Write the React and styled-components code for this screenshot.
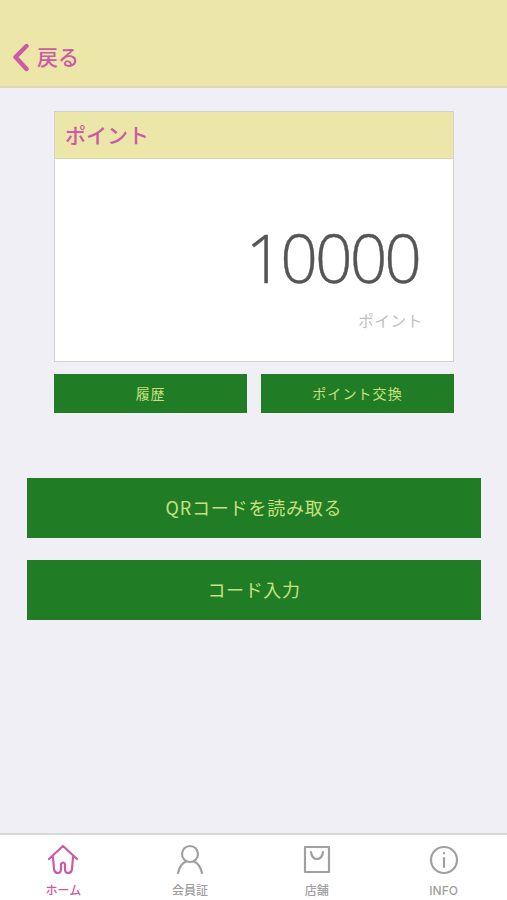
import React from "react";
import styled, { createGlobalStyle } from "styled-components";

const Global = createGlobalStyle`
  html, body { margin: 0; padding: 0; background: #efeff5; }
  body { font-family: "Noto Sans CJK JP", "Noto Sans", sans-serif; }
  * { box-sizing: border-box; }
`;
const Page = styled.div`
  width: 507px; height: 900px; display: flex; flex-direction: column; background: #efeff5; overflow: hidden;
`;
const Header = styled.header`
  height: 88px; flex: none; background: #ece6a9; border-bottom: 2px solid #dcd8b8;
  display: flex; align-items: flex-end; padding: 0 0 14px 12px; gap: 3px;
`;
const BackLabel = styled.span`
  font-size: 21px; line-height: 32px; font-weight: 500; color: #cc5aa5;
`;
const Main = styled.main`
  flex: 1; display: flex; flex-direction: column; padding: 23px 26px 0 27px;
`;
const PointSection = styled.section`
  padding: 0 27px; display: flex; flex-direction: column; gap: 12px;
`;
const Card = styled.div`
  height: 251px; border: 1px solid #d2d2d2; background: #fff; display: flex; flex-direction: column;
`;
const CardTitle = styled.div`
  height: 47px; flex: none; background: #ece6a9; border-bottom: 1px solid #d8d4ac; padding-left: 10px;
  font-size: 21px; line-height: 45px; font-weight: 500; color: #cc5aa5;
`;
const CardBody = styled.div`
  flex: 1; display: flex; flex-direction: column; align-items: flex-end; padding: 55px 31px 0 0;
`;
const Amount = styled.div`
  font-family: "Open Sans", sans-serif; font-weight: 300; font-size: 66px; line-height: 86px; letter-spacing: -3px; color: #555; margin-right: 3px;
  -webkit-text-stroke: 0.4px #555;
`;
const Unit = styled.div`
  font-size: 15.5px; line-height: 24px; color: #c0c0c0; margin-top: 8px; letter-spacing: 0.7px; margin-right: -1px;
`;
const SmallRow = styled.div`
  display: grid; grid-template-columns: 193px 193px; justify-content: space-between;
`;
const GreenButton = styled.button`
  height: ${p => p.$h}px; border: 0; background: #217d25; color: #c8e07f;
  font-family: inherit; font-size: ${p => p.$fs}px; letter-spacing: ${p => p.$ls}px;
  padding: 0 0 2px; display: flex; align-items: center; justify-content: center;
`;
const BigStack = styled.div`
  display: flex; flex-direction: column; gap: 22px; margin-top: 65px;
`;
const TabBar = styled.nav`
  height: 67px; flex: none; background: #fff; border-top: 2px solid #d8d8d8;
  display: grid; grid-template-columns: repeat(4, 1fr);
`;
const Tab = styled.div`
  display: flex; flex-direction: column; align-items: center; padding-top: 9px;
  color: ${p => (p.$active ? "#cc5aa5" : "#a0a0a0")};
`;
const TabIcon = styled.svg`
  width: 34px; height: 32px; fill: none; stroke: currentColor; stroke-width: 2.2; stroke-linecap: round; stroke-linejoin: round; display: block;
`;
const TabLabel = styled.span`
  font-family: Inter, "Noto Sans CJK JP", sans-serif;
  font-size: 12px; line-height: 16px; margin-top: 7px; font-weight: 500;
`;

export default function App() {
  return (
    <Page>
      <Global />
      <Header>
        <svg width="22" height="32" viewBox="0 0 22 32" fill="none" stroke="#cc5aa5" strokeWidth="4.4" strokeLinecap="round" strokeLinejoin="round">
          <path d="M14.5 6 L3.5 17 L14.5 29" />
        </svg>
        <BackLabel>戻る</BackLabel>
      </Header>
      <Main>
        <PointSection>
          <Card>
            <CardTitle>ポイント</CardTitle>
            <CardBody>
              <Amount>10000</Amount>
              <Unit>ポイント</Unit>
            </CardBody>
          </Card>
          <SmallRow>
            <GreenButton $h={39} $fs={14} $ls={0.8}>履歴</GreenButton>
            <GreenButton $h={39} $fs={14} $ls={1.1}>ポイント交換</GreenButton>
          </SmallRow>
        </PointSection>
        <BigStack>
          <GreenButton $h={60} $fs={18} $ls={0.8}>QRコードを読み取る</GreenButton>
          <GreenButton $h={60} $fs={18} $ls={0.6}>コード入力</GreenButton>
        </BigStack>
      </Main>
      <TabBar>
        <Tab $active>
          <TabIcon viewBox="0 0 34 32">
            <path d="M3 15 L17 2 L31 15 M7 13 L8 25 Q8.5 29 12 29 Q15 29 15 25 L15 20 Q17 17 19 20 L19 25 Q19 29 22 29 Q25.5 29 26 25 L27 13" />
          </TabIcon>
          <TabLabel>ホーム</TabLabel>
        </Tab>
        <Tab>
          <TabIcon viewBox="0 0 34 32">
            <circle cx="17" cy="10" r="8" />
            <path d="M5 29 Q7 20 13 17.5 M29 29 Q27 20 21 17.5" />
          </TabIcon>
          <TabLabel>会員証</TabLabel>
        </Tab>
        <Tab>
          <TabIcon viewBox="0 0 34 32">
            <path d="M5 3 H29 V28 H5 Z M11 8 Q12 15 17 15 Q22 15 23 8" />
          </TabIcon>
          <TabLabel>店舗</TabLabel>
        </Tab>
        <Tab>
          <TabIcon viewBox="0 0 34 32">
            <circle cx="17" cy="16" r="13" />
            <path d="M17 14 V23 M17 9 V9.5" />
          </TabIcon>
          <TabLabel>INFO</TabLabel>
        </Tab>
      </TabBar>
    </Page>
  );
}
